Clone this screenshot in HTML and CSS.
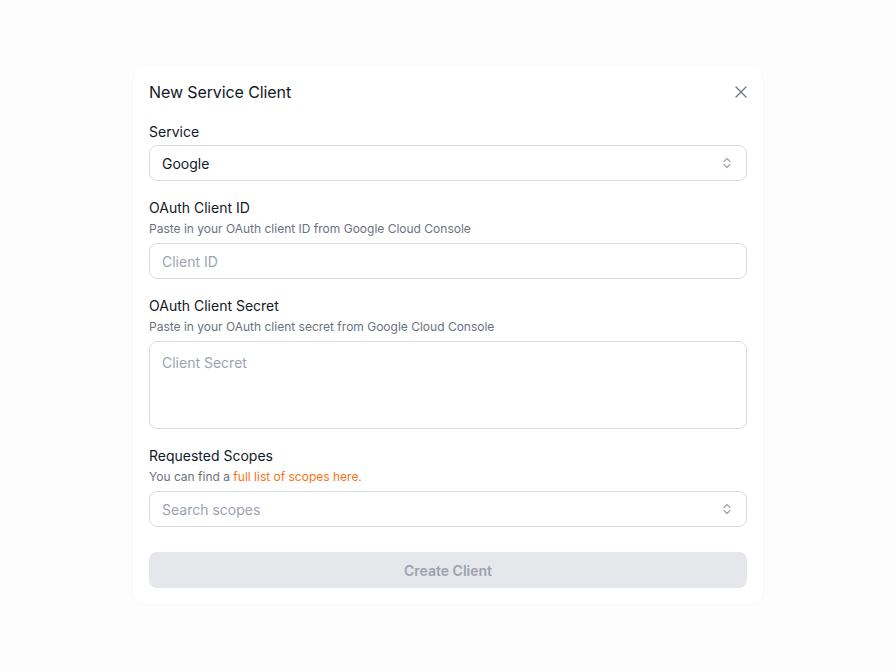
FILE: index.html
```html
<!DOCTYPE html>
<html>
<head>
<meta charset="utf-8">
<link rel="stylesheet" href="styles.css">
</head>
<body>
<div class="card">
  <div class="header">
    <h2 class="title">New Service Client</h2>
    <button class="close" aria-label="Close">
      <svg width="12" height="12" viewBox="0 0 12 12"><path d="M1 1L11 11M11 1L1 11" stroke="#6b7280" stroke-width="1.3" stroke-linecap="round"/></svg>
    </button>
  </div>

  <div class="field">
    <label class="label">Service</label>
    <div class="box select">
      <span class="value">Google</span>
      <svg class="chev" width="10" height="14" viewBox="0 0 10 14"><path d="M2 5.5L5 2.5L8 5.5M2 8.5L5 11.5L8 8.5" fill="none" stroke="#9ca3af" stroke-width="1.2" stroke-linecap="round" stroke-linejoin="round"/></svg>
    </div>
  </div>

  <div class="field">
    <label class="label">OAuth Client ID</label>
    <p class="help">Paste in your OAuth client ID from Google Cloud Console</p>
    <div class="box input"><span class="ph">Client ID</span></div>
  </div>

  <div class="field">
    <label class="label">OAuth Client Secret</label>
    <p class="help">Paste in your OAuth client secret from Google Cloud Console</p>
    <div class="box textarea"><span class="ph">Client Secret</span></div>
  </div>

  <div class="field">
    <label class="label">Requested Scopes</label>
    <p class="help">You can find a <a class="link" href="#">full list of scopes here.</a></p>
    <div class="box select"><span class="ph">Search scopes</span>
      <svg class="chev" width="10" height="14" viewBox="0 0 10 14"><path d="M2 5.5L5 2.5L8 5.5M2 8.5L5 11.5L8 8.5" fill="none" stroke="#9ca3af" stroke-width="1.2" stroke-linecap="round" stroke-linejoin="round"/></svg>
    </div>
  </div>

  <button class="submit" disabled>Create Client</button>
</div>
</body>
</html>
```

FILE: styles.css
```css
* { box-sizing: border-box; }
html, body { margin: 0; padding: 0; }
body {
  background: #fdfdfd;
  font-family: "Inter", "Liberation Sans", sans-serif;
  color: #111827;
  height: 672px;
  display: flex;
  align-items: flex-start;
  justify-content: center;
  padding-top: 66px;
}
.card {
  width: 630px;
  background: #ffffff;
  border-radius: 12px;
  box-shadow: 0 0 0 1px #f9f9fa;
  padding: 14px 16px 16px;
  display: flex;
  flex-direction: column;
}
.header {
  display: flex;
  align-items: center;
  justify-content: space-between;
  height: 24px;
  margin-bottom: 18px;
}
.title {
  margin: 0;
  font-size: 16px;
  font-weight: 400;
  letter-spacing: -0.1px;
  color: #111827;
}
.close {
  background: none;
  border: 0;
  padding: 0;
  width: 12px;
  height: 12px;
  display: flex;
}
.field { display: flex; flex-direction: column; margin-bottom: 17px; }
.label {
  font-size: 14px;
  line-height: 20px;
  font-weight: 400;
  color: #111827;
}
.help {
  margin: 3px 0 0;
  font-size: 12px;
  line-height: 16px;
  color: #6b7280;
}
.link { color: #f97316; text-decoration: none; }
.box {
  border: 1px solid #d9dce1;
  border-radius: 8px;
  height: 36px;
  padding: 0 12px;
  display: flex;
  align-items: center;
  font-size: 14px;
  margin-top: 6px;
}
.field > .label + .box { margin-top: 3px; }
.select { justify-content: space-between; padding-right: 14px; }
.value { color: #111827; }
.ph { color: #9ca3af; }
.textarea { height: 88px; align-items: flex-start; padding-top: 12px; }
.submit {
  margin-top: 8px;
  height: 36px;
  border: 0;
  border-radius: 8px;
  background: #e5e7eb;
  color: #9ca3af;
  font-family: inherit;
  font-weight: 600;
  font-size: 14px;
}
```
